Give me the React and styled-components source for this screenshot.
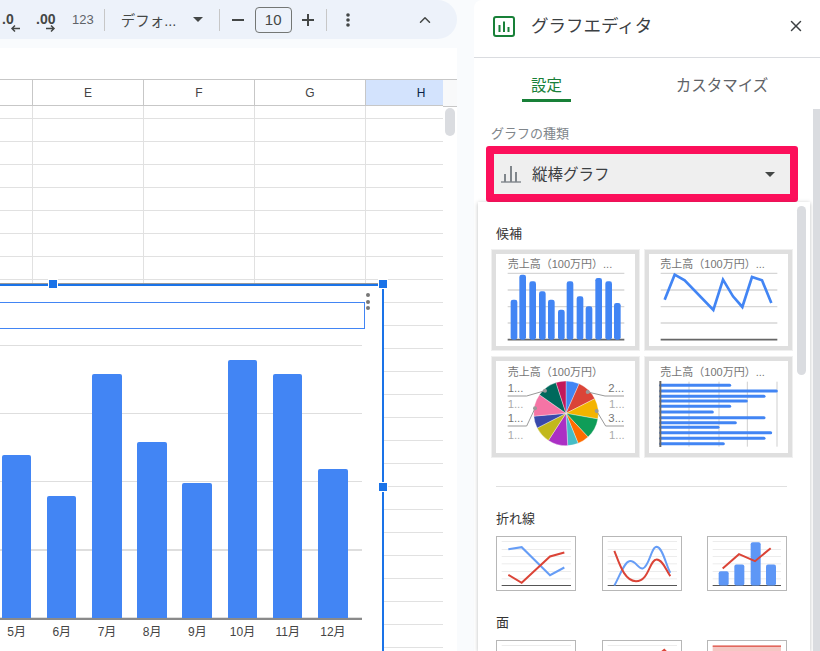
import React from "react";
import styled, { createGlobalStyle } from "styled-components";
import { ChevronUp, X } from "lucide-react";

const GlobalStyle = createGlobalStyle`
  html, body {
    margin: 0;
    padding: 0;
    height: 651px;
    overflow: hidden;
    background: #f9fbfd;
    font-family: "Liberation Sans", "Noto Sans CJK JP", sans-serif;
  }
`;

const Page = styled.div`
  display: flex;
  width: 820px;
  height: 651px;
  overflow: hidden;
  justify-content: space-between;
`;

const SheetColumn = styled.div`
  display: flex;
  flex-direction: column;
  width: 457px;
  height: 651px;
`;

const Toolbar = styled.div`
  display: flex;
  align-items: center;
  flex: none;
  height: 39px;
  padding-left: 1px;
  background: #edf2fa;
  border-radius: 0 20px 20px 0;
  color: #444746;
`;

const Divider = styled.span`
  flex: none;
  width: 1px;
  height: 22px;
  margin: ${(p) => p.$margin};
  background: #c7c7c7;
`;

const NumFormat = styled.span`
  margin-left: 16px;
  font-size: 13px;
  color: #5f6368;
`;

const FontName = styled.span`
  margin-left: 16px;
  width: 68px;
  font-size: 14.5px;
  white-space: nowrap;
`;

const FontSize = styled.span`
  display: flex;
  align-items: center;
  justify-content: center;
  box-sizing: border-box;
  width: 37px;
  height: 26px;
  margin: 0 10px 0 11px;
  border: 1px solid #747775;
  border-radius: 4px;
  font-size: 15px;
`;

const CollapseButton = styled.span`
  display: flex;
  margin-left: 66px;
`;

const FormulaBar = styled.div`
  flex: none;
  height: 31px;
  margin-top: 9px;
  background: #fff;
`;

const SheetBody = styled.div`
  position: relative;
  display: flex;
  flex: 1;
  background: #fff;
  overflow: hidden;
`;

const GridArea = styled.div`
  width: 443px;
  overflow: hidden;
`;

const Gutter = styled.div`
  flex: 1;
  box-sizing: border-box;
  border-top: 1px solid #c7c7c7;
  background: #fff;
`;

const GutterHead = styled.div`
  height: 26px;
  background: #f8f9fa;
  border-bottom: 1px solid #c7c7c7;
`;

const GutterThumb = styled.div`
  width: 10px;
  height: 28px;
  margin: 1px 0 0 2px;
  border-radius: 5px;
  background: #dadce0;
`;

const HeaderRow = styled.div`
  display: flex;
  box-sizing: border-box;
  width: 477px;
  height: 27px;
  border-top: 1px solid #c7c7c7;
  border-bottom: 1px solid #c7c7c7;
`;

const HeaderCell = styled.div`
  flex: none;
  box-sizing: border-box;
  display: flex;
  align-items: center;
  justify-content: center;
  width: ${(p) => p.$width}px;
  border-right: 1px solid #c7c7c7;
  background: ${(p) => (p.$selected ? "#d3e3fd" : "#fff")};
  color: ${(p) => (p.$selected ? "#0b1f48" : "#444")};
  font-size: 12px;
`;

const GridRow = styled.div`
  display: flex;
  box-sizing: border-box;
  width: 477px;
  height: ${(p) => p.$height}px;
  border-bottom: 1px solid #e1e1e1;
`;

const GridCell = styled.div`
  flex: none;
  box-sizing: border-box;
  width: ${(p) => p.$width}px;
  border-right: 1px solid #e1e1e1;
`;

const Chart = styled.div`
  position: absolute;
  left: -2px;
  top: 205px;
  box-sizing: border-box;
  width: 386px;
  height: 400px;
  background: #fff;
  border-top: 2px solid #1a73e8;
  border-right: 2px solid #1a73e8;
  border-left: 2px solid #1a73e8;
  box-shadow: 0 -1px 0 #999;
`;

const Handle = styled.span`
  position: absolute;
  left: ${(p) => p.$left}px;
  top: ${(p) => p.$top}px;
  width: 8px;
  height: 8px;
  background: #1a73e8;
  outline: 1px solid #fff;
`;

const ChartMenu = styled.div`
  position: absolute;
  left: 366px;
  top: 7px;
  display: flex;
  flex-direction: column;
  gap: 2.5px;
`;

const MenuDot = styled.span`
  width: 4px;
  height: 4px;
  border-radius: 50%;
  background: #777;
`;

const ChartTitleBox = styled.div`
  box-sizing: border-box;
  width: 365px;
  height: 27px;
  margin-top: 16px;
  border: 1px solid #4285f4;
  border-left: none;
`;

const Plot = styled.div`
  display: flex;
  align-items: flex-end;
  gap: 15.6px;
  box-sizing: border-box;
  width: 362px;
  height: 275px;
  margin-top: 16px;
  padding-left: 1.6px;
  border-bottom: 2px solid #8a8a8a;
  background: repeating-linear-gradient(
    to bottom,
    #dedede 0,
    #dedede 1.5px,
    transparent 1.5px,
    transparent 68px
  );
`;

const Bar = styled.div`
  flex: none;
  width: 29.6px;
  height: ${(p) => p.$height}px;
  border-radius: 2px 2px 0 0;
  background: #4285f4;
`;

const AxisLabels = styled.div`
  display: flex;
  margin-top: 2px;
  margin-left: -6px;
`;

const AxisLabel = styled.span`
  flex: none;
  width: 45.2px;
  text-align: center;
  font-size: 12px;
  color: #444;
`;

const Panel = styled.aside`
  display: flex;
  flex-direction: column;
  width: 346px;
  height: 651px;
  background: #fff;
  border-top-left-radius: 8px;
`;

const PanelHeader = styled.header`
  display: flex;
  align-items: center;
  flex: none;
  box-sizing: border-box;
  height: 58px;
  padding: 0 15px 5px 19px;
  border-bottom: 1px solid #dadce0;
`;

const PanelTitle = styled.h1`
  flex: 1;
  margin: 0 0 4px 16px;
  font-size: 17.5px;
  font-weight: 400;
  color: #3c4043;
`;

const CloseButton = styled.span`
  display: flex;
  color: #3c4043;
`;

const PanelBody = styled.div`
  display: flex;
  flex: 1;
  min-height: 0;
`;

const PanelContent = styled.div`
  display: flex;
  flex-direction: column;
  width: 339px;
  min-height: 0;
`;

const Tabs = styled.div`
  display: flex;
  flex: none;
  height: 44px;
  margin-left: 48px;
`;

const Tab = styled.div`
  box-sizing: border-box;
  flex: none;
  width: ${(p) => p.$width}px;
  margin-left: ${(p) => p.$offset}px;
  padding-top: 15px;
  height: 44px;
  text-align: center;
  font-size: 15.5px;
  color: ${(p) => (p.$active ? "#188038" : "#5f6368")};
  border-bottom: 3px solid ${(p) => (p.$active ? "#188038" : "transparent")};
`;

const TypeLabel = styled.div`
  flex: none;
  margin: 24px 0 0 17px;
  height: 16px;
  font-size: 13px;
  line-height: 16px;
  color: #80868b;
`;

const TypeSelect = styled.div`
  display: flex;
  align-items: center;
  flex: none;
  box-sizing: border-box;
  width: 312px;
  height: 56px;
  margin: 4px 0 0 12px;
  padding: 0 15px 0 7px;
  border: 8px solid #fc0f5b;
  border-radius: 3px;
  background: #efefef;
`;

const SelectText = styled.span`
  flex: 1;
  margin: 0 0 3px 11px;
  font-size: 15.5px;
  color: #3c4043;
`;

const Caret = styled.span`
  flex: none;
  width: 0;
  height: 0;
  margin: ${(p) => p.$margin || 0};
  border-left: 5px solid transparent;
  border-right: 5px solid transparent;
  border-top: 5px solid #444746;
`;

const Popup = styled.div`
  display: flex;
  flex: 1;
  min-height: 0;
  width: 332px;
  margin-left: 4px;
  background: #fff;
  box-shadow: 0 1px 4px rgba(60, 64, 67, 0.35);
  overflow: hidden;
`;

const PopupBody = styled.div`
  flex: 1;
  padding: 24px 0 0 18px;
`;

const PopupScroll = styled.div`
  flex: none;
  width: 9px;
  margin-right: 4px;
  padding-top: 4px;
`;

const PopupThumb = styled.div`
  height: 169px;
  border-radius: 5px;
  background: #dadce0;
`;

const SectionTitle = styled.div`
  height: 16px;
  margin-top: ${(p) => p.$top || 0}px;
  font-size: 13px;
  line-height: 16px;
  color: #333;
`;

const SuggestGrid = styled.div`
  display: grid;
  grid-template-columns: 149px 149px;
  grid-auto-rows: 102px;
  gap: 5px 4px;
  margin: 7px 0 0 -5px;
`;

const SuggestCard = styled.div`
  box-sizing: border-box;
  border: 1px solid #f0f0f0;
  outline: 4px solid #dfdfdf;
  outline-offset: -5px;
  background: #fff;
`;

const Thumb = styled.svg`
  display: block;
  width: 100%;
  height: 100%;
`;

const Rule = styled.div`
  width: 291px;
  height: 1px;
  margin-top: 28px;
  background: #e0e0e0;
`;

const MiniRow = styled.div`
  display: flex;
  gap: 25.5px;
  margin-top: 9px;
`;

const MiniCard = styled.div`
  box-sizing: border-box;
  flex: none;
  width: 80px;
  height: 55px;
  border: 1px solid #b7b7b7;
  background: #fff;
`;

const Track = styled.div`
  flex: 1;
  margin-top: 51px;
  background: #dadce0;
`;

const BLUE = "#4285f4";
const columns = [33, 111, 111, 111, 111];
const rowHeights = [13, 23, 23, 23, 23, 23, 23, 23, 23, 23, 23, 23, 23, 23, 23, 23, 23, 23, 23, 23, 23, 23, 23, 23, 23];
const sales = [
  { month: "5月", h: 163 },
  { month: "6月", h: 122 },
  { month: "7月", h: 244 },
  { month: "8月", h: 176 },
  { month: "9月", h: 135 },
  { month: "10月", h: 258 },
  { month: "11月", h: 244 },
  { month: "12月", h: 149 },
];

const cardBars = [
  [87, 180], [113, 105], [143, 125], [172, 155], [199, 180], [229, 210],
  [255, 125], [285, 170], [312, 200], [341, 115], [371, 125], [397, 190],
];

const hBars = [
  [436, 735], [453, 875], [469, 838], [483, 785], [499, 735], [516, 683],
  [533, 838], [548, 752], [562, 700], [578, 858], [595, 838], [611, 716],
];

const pieSlices = [
  [0, 24, "#4285f4"], [24, 63, "#db4437"], [63, 100, "#f4b400"], [100, 137, "#0f9d58"],
  [137, 158, "#ff6d00"], [158, 177, "#46bdc6"], [177, 213, "#ab30c4"], [213, 243, "#c2b81c"],
  [243, 265, "#3949ab"], [265, 305, "#f574a5"], [305, 342, "#00695c"], [342, 360, "#c2185b"],
];

function slicePath(from, to) {
  const cx = 243;
  const cy = 520;
  const r = 97;
  const pt = (a) => {
    const rad = ((a - 90) * Math.PI) / 180;
    return `${cx + r * Math.cos(rad)} ${cy + r * Math.sin(rad)}`;
  };
  return `M${cx} ${cy}L${pt(from)}A${r} ${r} 0 0 1 ${pt(to)}Z`;
}

function CardTitle({ x, y, more }) {
  return (
    <text x={x} y={y} fontSize="33" fill="#757575">
      売上高（100万円）{more ? "..." : ""}
    </text>
  );
}

function CardGrid({ x1, x2 }) {
  return (
    <g>
      {[101, 151, 201, 250].map((y) => (
        <line key={y} x1={x1} x2={x2} y1={y} y2={y} stroke="#d6d6d6" strokeWidth="4" />
      ))}
      <line x1={x1} x2={x2} y1={300} y2={300} stroke="#666" strokeWidth="5" />
    </g>
  );
}

function ColumnCard() {
  return (
    <Thumb viewBox="21 31 441 300">
      <CardTitle x={68} y={86} more />
      <CardGrid x1={68} x2={418} />
      {cardBars.map(([x, top]) => (
        <rect key={x} x={x - 10} y={top} width="20" height={300 - top} rx="7" fill={BLUE} />
      ))}
    </Thumb>
  );
}

function LineCard() {
  return (
    <Thumb viewBox="481 31 441 300">
      <CardTitle x={527} y={86} more />
      <CardGrid x1={528} x2={878} />
      <polyline
        points="540,180 570,105 600,122 686,211 715,120 745,170 773,202 802,112 832,122 860,190"
        fill="none"
        stroke={BLUE}
        strokeWidth="8"
      />
    </Thumb>
  );
}

function PieCard() {
  const rows = [
    [68, 456, "1...", "#757575"],
    [68, 503, "1...", "#aaa"],
    [68, 546, "1...", "#757575"],
    [68, 596, "1...", "#aaa"],
    [370, 456, "2...", "#757575"],
    [372, 503, "1...", "#aaa"],
    [370, 546, "3...", "#757575"],
    [372, 596, "1...", "#aaa"],
  ];
  return (
    <Thumb viewBox="21 351 441 300">
      <CardTitle x={68} y={407} />
      {rows.map(([x, y, t, fill]) => (
        <text key={`${x}${y}`} x={x} y={y} fontSize="34" fill={fill}>
          {t}
        </text>
      ))}
      {pieSlices.map(([from, to, color]) => (
        <path key={from} d={slicePath(from, to)} fill={color} stroke="#fff" strokeWidth="1" />
      ))}
      <g fill="none" stroke="#999" strokeWidth="3">
        <polyline points="68,468 125,468 180,452" />
        <polyline points="68,558 125,558 150,505" />
        <polyline points="417,468 360,468 308,456" />
        <polyline points="417,558 362,558 335,513" />
      </g>
      <g fill="#999">
        <circle cx="180" cy="452" r="6" />
        <circle cx="150" cy="505" r="6" />
        <circle cx="308" cy="456" r="6" />
        <circle cx="335" cy="513" r="6" />
      </g>
    </Thumb>
  );
}

function BarCard() {
  return (
    <Thumb viewBox="481 351 441 300">
      <CardTitle x={527} y={407} more />
      {[613, 703, 788, 877].map((x) => (
        <line key={x} x1={x} x2={x} y1={425} y2={620} stroke="#cfcfcf" strokeWidth="3" />
      ))}
      {hBars.map(([y, end]) => (
        <line key={y} x1={528} x2={end} y1={y} y2={y} stroke={BLUE} strokeWidth="9" strokeLinecap="round" />
      ))}
      <line x1={527} x2={527} y1={423} y2={621} stroke="#666" strokeWidth="6" />
    </Thumb>
  );
}

function MiniGrid({ x1, x2 }) {
  return (
    <g>
      {[214, 238, 259, 281, 304, 326].map((y) => (
        <line key={y} x1={x1} x2={x2} y1={y} y2={y} stroke="#ececec" strokeWidth="3" />
      ))}
      <line x1={x1} x2={x2} y1={346} y2={346} stroke="#555" strokeWidth="3" />
    </g>
  );
}

const MINI_BLUE = "#669df6";
const MINI_RED = "#db4437";

function LineThumb() {
  return (
    <Thumb viewBox="36 201 234 158">
      <MiniGrid x1={50} x2={258} />
      <polyline points="70,237 110,231 195,315 238,292" fill="none" stroke={MINI_BLUE} strokeWidth="6" />
      <polyline points="70,314 110,338 195,259 238,247" fill="none" stroke={MINI_RED} strokeWidth="6" />
    </Thumb>
  );
}

function SmoothThumb() {
  return (
    <Thumb viewBox="351 201 234 158">
      <MiniGrid x1={365} x2={573} />
      <path
        d="M385 346C400 320 415 275 430 273C450 270 455 297 470 295C490 290 495 230 512 230C530 232 540 285 553 308"
        fill="none"
        stroke={MINI_BLUE}
        strokeWidth="6"
      />
      <path
        d="M385 242C400 280 415 333 450 333C490 333 490 268 512 268C530 268 540 300 553 318"
        fill="none"
        stroke={MINI_RED}
        strokeWidth="6"
      />
    </Thumb>
  );
}

function ComboThumb() {
  return (
    <Thumb viewBox="669 201 234 158">
      <MiniGrid x1={683} x2={888} />
      {[[701, 303], [748, 283], [797, 216], [843, 283]].map(([x, top]) => (
        <rect key={x} x={x} y={top} width="30" height={346 - top} rx="6" fill="#5e97f6" />
      ))}
      <polyline points="713,295 762,252 810,273 857,234" fill="none" stroke={MINI_RED} strokeWidth="6" />
    </Thumb>
  );
}

function AreaThumb() {
  return (
    <Thumb viewBox="36 513 234 158">
      <line x1={50} x2={258} y1={526} y2={526} stroke="#ececec" strokeWidth="3" />
    </Thumb>
  );
}

function StackedThumb() {
  return (
    <Thumb viewBox="351 513 234 158">
      <line x1={365} x2={573} y1={526} y2={526} stroke="#ececec" strokeWidth="3" />
      <polygon points="505,560 535,535 560,560" fill={MINI_RED} />
    </Thumb>
  );
}

function FullThumb() {
  return (
    <Thumb viewBox="669 513 234 158">
      <rect x="683" y="528" width="205" height="140" fill="#f4c7c3" />
      <line x1={683} x2={888} y1={528} y2={528} stroke={MINI_RED} strokeWidth="4" />
    </Thumb>
  );
}

function DecreaseDecimal() {
  return (
    <svg width="20" height="30" viewBox="0 0 20 30">
      <text x="1" y="19" fontSize="14" fontWeight="700" fill="#444746">.0</text>
      <path d="M19 23.5H11M14 20.5l-3 3 3 3" fill="none" stroke="#444746" strokeWidth="1.5" />
    </svg>
  );
}

function IncreaseDecimal() {
  return (
    <svg width="20" height="30" viewBox="0 0 20 30" style={{ marginLeft: 15 }}>
      <text x="0" y="19" fontSize="14" fontWeight="700" fill="#444746">.00</text>
      <path d="M10 23.5h8M15 20.5l3 3-3 3" fill="none" stroke="#444746" strokeWidth="1.5" />
    </svg>
  );
}

function MinusIcon() {
  return (
    <svg width="12" height="12" viewBox="0 0 12 12">
      <path d="M0 6h12" stroke="#444746" strokeWidth="2" />
    </svg>
  );
}

function PlusIcon() {
  return (
    <svg width="12" height="12" viewBox="0 0 12 12">
      <path d="M0 6h12M6 0v12" stroke="#444746" strokeWidth="2" />
    </svg>
  );
}

function KebabIcon() {
  return (
    <svg width="4" height="14" viewBox="0 0 4 14">
      <circle cx="2" cy="2" r="1.8" fill="#444746" />
      <circle cx="2" cy="7" r="1.8" fill="#444746" />
      <circle cx="2" cy="12" r="1.8" fill="#444746" />
    </svg>
  );
}

function ChartLogo() {
  return (
    <svg width="22" height="21" viewBox="0 0 22 21">
      <rect x="1" y="1" width="20" height="19" rx="2" fill="none" stroke="#188038" strokeWidth="2" />
      <path d="M5.5 9h2v7h-2zM10 5.5h2V16h-2zM14.5 11h2v5h-2z" fill="#188038" />
    </svg>
  );
}

function ColumnIcon() {
  return (
    <svg width="20" height="18" viewBox="0 0 20 18">
      <path d="M3 9h2v8H3zM9 1h2v16H9zM14 7h2v10h-2z" fill="#80868b" />
      <path d="M0 17h20" stroke="#80868b" strokeWidth="1.4" />
    </svg>
  );
}

export default function App() {
  return (
    <>
      <GlobalStyle />
      <Page>
        <SheetColumn>
          <Toolbar>
            <DecreaseDecimal />
            <IncreaseDecimal />
            <NumFormat>123</NumFormat>
            <Divider $margin="0 0 0 10px" />
            <FontName>デフォ...</FontName>
            <Caret $margin="0 0 0 4px" />
            <Divider $margin="0 12px 0 16px" />
            <MinusIcon />
            <FontSize>10</FontSize>
            <PlusIcon />
            <Divider $margin="0 19px 0 12px" />
            <KebabIcon />
            <CollapseButton>
              <ChevronUp size={18} strokeWidth={2} />
            </CollapseButton>
          </Toolbar>
          <FormulaBar />
          <SheetBody>
            <GridArea>
              <HeaderRow>
                <HeaderCell $width={columns[0]} />
                <HeaderCell $width={columns[1]}>E</HeaderCell>
                <HeaderCell $width={columns[2]}>F</HeaderCell>
                <HeaderCell $width={columns[3]}>G</HeaderCell>
                <HeaderCell $width={columns[4]} $selected>H</HeaderCell>
              </HeaderRow>
              {rowHeights.map((h, i) => (
                <GridRow key={i} $height={h}>
                  {columns.map((w, c) => (
                    <GridCell key={c} $width={w} />
                  ))}
                </GridRow>
              ))}
            </GridArea>
            <Gutter>
              <GutterHead />
              <GutterThumb />
            </Gutter>
            <Chart>
              <Handle $left={49} $top={-6} />
              <Handle $left={379} $top={-6} />
              <Handle $left={379} $top={197} />
              <ChartMenu>
                <MenuDot />
                <MenuDot />
                <MenuDot />
              </ChartMenu>
              <ChartTitleBox />
              <Plot>
                {sales.map((s) => (
                  <Bar key={s.month} $height={s.h} />
                ))}
              </Plot>
              <AxisLabels>
                {sales.map((s) => (
                  <AxisLabel key={s.month}>{s.month}</AxisLabel>
                ))}
              </AxisLabels>
            </Chart>
          </SheetBody>
        </SheetColumn>
        <Panel>
          <PanelHeader>
            <ChartLogo />
            <PanelTitle>グラフエディタ</PanelTitle>
            <CloseButton>
              <X size={18} strokeWidth={2} />
            </CloseButton>
          </PanelHeader>
          <PanelBody>
            <PanelContent>
              <Tabs>
                <Tab $active $width={49} $offset={0}>設定</Tab>
                <Tab $width={110} $offset={96}>カスタマイズ</Tab>
              </Tabs>
              <TypeLabel>グラフの種類</TypeLabel>
              <TypeSelect>
                <ColumnIcon />
                <SelectText>縦棒グラフ</SelectText>
                <Caret />
              </TypeSelect>
              <Popup>
                <PopupBody>
                  <SectionTitle>候補</SectionTitle>
                  <SuggestGrid>
                    <SuggestCard><ColumnCard /></SuggestCard>
                    <SuggestCard><LineCard /></SuggestCard>
                    <SuggestCard><PieCard /></SuggestCard>
                    <SuggestCard><BarCard /></SuggestCard>
                  </SuggestGrid>
                  <Rule />
                  <SectionTitle $top={24}>折れ線</SectionTitle>
                  <MiniRow>
                    <MiniCard><LineThumb /></MiniCard>
                    <MiniCard><SmoothThumb /></MiniCard>
                    <MiniCard><ComboThumb /></MiniCard>
                  </MiniRow>
                  <SectionTitle $top={24}>面</SectionTitle>
                  <MiniRow>
                    <MiniCard><AreaThumb /></MiniCard>
                    <MiniCard><StackedThumb /></MiniCard>
                    <MiniCard><FullThumb /></MiniCard>
                  </MiniRow>
                </PopupBody>
                <PopupScroll>
                  <PopupThumb />
                </PopupScroll>
              </Popup>
            </PanelContent>
            <Track />
          </PanelBody>
        </Panel>
      </Page>
    </>
  );
}
